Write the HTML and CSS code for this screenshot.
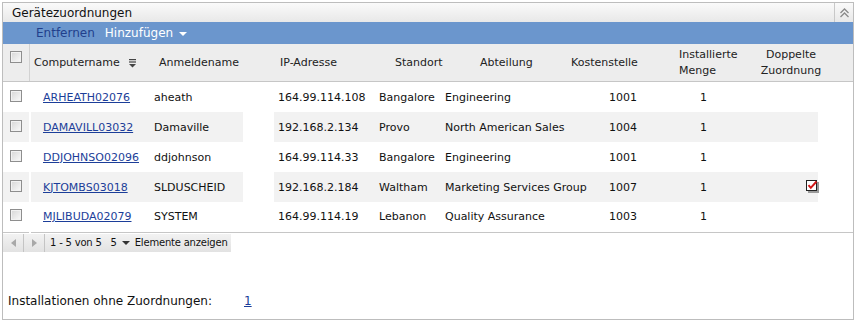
FILE: index.html
```html
<!DOCTYPE html>
<html lang="de">
<head>
    <meta charset="UTF-8">
    <title>Gerätezuordnungen</title>
    <link rel="stylesheet" href="styles.css">
</head>
<body>
    <div class="panel">
        <div class="panel-title">
            <span class="title-text">Gerätezuordnungen</span>
            <span class="collapse">
                <svg width="11" height="10" viewBox="0 0 11 10">
                    <path d="M1.5 5 L5.5 1 L9.5 5 M1.5 9 L5.5 5 L9.5 9" fill="none" stroke="#8a8a8a" stroke-width="1.3"/>
                </svg>
            </span>
        </div>

        <div class="toolbar">
            <span class="tool tool-dark">Entfernen</span>
            <span class="tool tool-light">Hinzufügen <span class="caret"></span></span>
        </div>

        <div class="grid-head">
            <div class="hcell h-cb"><span class="cb"></span></div>
            <div class="hcell h-comp">Computername
                <svg class="sort" width="9" height="9" viewBox="0 0 9 9">
                    <rect x="1" y="0" width="7" height="1.2" fill="#444"/>
                    <rect x="1" y="2.4" width="7" height="1.2" fill="#444"/>
                    <path d="M1 5 H8 L4.5 8.6 Z" fill="#444"/>
                </svg>
            </div>
            <div class="hcell h-user">Anmeldename</div>
            <div class="hcell h-ip">IP-Adresse</div>
            <div class="hcell h-site">Standort</div>
            <div class="hcell h-dept">Abteilung</div>
            <div class="hcell h-cost">Kostenstelle</div>
            <div class="hcell h-qty">Installierte<br>Menge</div>
            <div class="hcell h-dup">Doppelte<br>Zuordnung</div>
        </div>

        <table class="grid">
            <colgroup>
                <col class="c-cb">
                <col class="c-comp">
                <col class="c-user">
                <col class="c-gap">
                <col class="c-ip">
                <col class="c-site">
                <col class="c-dept">
                <col class="c-cost">
                <col class="c-qty">
                <col class="c-dup">
                <col class="c-end">
            </colgroup>
            <tbody>
                <tr>
                    <td class="td-cb"><span class="cb"></span></td>
                    <td class="td-comp"><a href="#">ARHEATH02076</a></td>
                    <td>aheath</td>
                    <td class="gap"></td>
                    <td>164.99.114.108</td>
                    <td>Bangalore</td>
                    <td>Engineering</td>
                    <td>1001</td>
                    <td>1</td>
                    <td></td>
                    <td class="gap"></td>
                </tr>
                <tr class="alt">
                    <td class="td-cb"><span class="cb"></span></td>
                    <td class="td-comp"><a href="#">DAMAVILL03032</a></td>
                    <td>Damaville</td>
                    <td class="gap"></td>
                    <td>192.168.2.134</td>
                    <td>Provo</td>
                    <td>North American Sales</td>
                    <td>1004</td>
                    <td>1</td>
                    <td></td>
                    <td class="gap"></td>
                </tr>
                <tr>
                    <td class="td-cb"><span class="cb"></span></td>
                    <td class="td-comp"><a href="#">DDJOHNSO02096</a></td>
                    <td>ddjohnson</td>
                    <td class="gap"></td>
                    <td>164.99.114.33</td>
                    <td>Bangalore</td>
                    <td>Engineering</td>
                    <td>1001</td>
                    <td>1</td>
                    <td></td>
                    <td class="gap"></td>
                </tr>
                <tr class="alt">
                    <td class="td-cb"><span class="cb"></span></td>
                    <td class="td-comp"><a href="#">KJTOMBS03018</a></td>
                    <td>SLDUSCHEID</td>
                    <td class="gap"></td>
                    <td>192.168.2.184</td>
                    <td>Waltham</td>
                    <td>Marketing Services Group</td>
                    <td>1007</td>
                    <td>1</td>
                    <td class="td-dup">
                        <svg width="13" height="13" viewBox="0 0 13 13">
                            <rect x="2" y="2" width="11" height="11" fill="#9a9a9a"/>
                            <rect x="0.5" y="0.5" width="10" height="10" fill="#fff" stroke="#222"/>
                            <path d="M2.5 5.2 L4.8 7.8 L10.5 1.5" fill="none" stroke="#d21818" stroke-width="2"/>
                        </svg>
                    </td>
                    <td class="gap"></td>
                </tr>
                <tr>
                    <td class="td-cb"><span class="cb"></span></td>
                    <td class="td-comp"><a href="#">MJLIBUDA02079</a></td>
                    <td>SYSTEM</td>
                    <td class="gap"></td>
                    <td>164.99.114.19</td>
                    <td>Lebanon</td>
                    <td>Quality Assurance</td>
                    <td>1003</td>
                    <td>1</td>
                    <td></td>
                    <td class="gap"></td>
                </tr>
            </tbody>
        </table>

        <div class="pager">
            <span class="pg-btn"><span class="arrow-left"></span></span>
            <span class="pg-btn"><span class="arrow-right"></span></span>
            <span class="pg-text">1 - 5 von 5</span>
            <span class="pg-size">5 <span class="caret dark"></span></span>
            <span class="pg-text">Elemente anzeigen</span>
        </div>

        <div class="summary">
            <span class="summary-label">Installationen ohne Zuordnungen:</span>
            <a href="#" class="summary-link">1</a>
        </div>
    </div>
</body>
</html>
```

FILE: styles.css
```css
/* Grundlayout */
* {
    margin: 0;
    padding: 0;
    box-sizing: border-box;
}

body {
    font-family: 'DejaVu Sans', sans-serif;
    font-size: 11px;
    color: #111;
    background: #fff;
    padding: 2px;
}

.panel {
    width: 852px;
    height: 318px;
    border: 1px solid #bdbdbd;
    background: #fff;
}

/* Titelleiste */
.panel-title {
    height: 19px;
    display: flex;
    align-items: center;
    justify-content: space-between;
    background: linear-gradient(#fafafa, #e8e8e8);
}

.title-text {
    font-size: 12px;
    padding-left: 9px;
    color: #111;
}

.collapse {
    width: 19px;
    height: 19px;
    border-left: 1px solid #c8c8c8;
    display: flex;
    align-items: center;
    justify-content: center;
}

/* Blaue Aktionsleiste */
.toolbar {
    height: 22px;
    background: #6b96cd;
    display: flex;
    align-items: center;
    padding-left: 33px;
    gap: 10px;
    font-size: 12px;
}

.tool-dark {
    color: #213f8c;
}

.tool-light {
    color: #fff;
}

.caret {
    display: inline-block;
    width: 0;
    height: 0;
    border-left: 4px solid transparent;
    border-right: 4px solid transparent;
    border-top: 4px solid #fff;
    vertical-align: middle;
    margin-left: 2px;
}

.caret.dark {
    border-top-color: #333;
}

/* Checkbox */
.cb {
    display: inline-block;
    width: 12px;
    height: 12px;
    border: 1px solid #8e8e8e;
    background: linear-gradient(135deg, #d6d6d6, #fafafa);
    box-shadow: inset 0 0 0 1px #f2f2f2;
}

/* Tabellenkopf */
.grid-head {
    display: flex;
    height: 38px;
    background: #ededed;
    border-bottom: 1px solid #c6c6c6;
    color: #222;
}

.hcell {
    display: flex;
    align-items: center;
    padding-left: 10px;
    line-height: 16px;
}

.h-cb {
    width: 27px;
    padding-left: 7px;
    align-items: flex-start;
    padding-top: 7px;
    border-right: 1px solid #d2d2d2;
}

.h-comp {
    width: 120px;
    padding-left: 4px;
    padding-top: 1px;
}

.sort {
    margin-left: 8px;
}

.h-user {
    width: 120px;
    padding-left: 9px;
}

.h-ip {
    width: 115px;
}

.h-site {
    width: 85px;
}

.h-dept {
    width: 91px;
}

.h-cost {
    width: 108px;
}

.h-qty {
    width: 73px;
}

.h-dup {
    width: 98px;
    padding-left: 0;
    justify-content: center;
    text-align: center;
}

/* Datenzeilen */
.grid {
    width: 850px;
    border-collapse: collapse;
    table-layout: fixed;
    border-bottom: 1px solid #c6c6c6;
}

.c-cb { width: 27px; }
.c-comp { width: 120px; }
.c-user { width: 93px; }
.c-gap { width: 31px; }
.c-ip { width: 101px; }
.c-site { width: 66px; }
.c-dept { width: 164px; }
.c-cost { width: 91px; }
.c-qty { width: 44px; }
.c-dup { width: 78px; }
.c-end { width: 35px; }

.grid td {
    height: 30px;
    padding: 0 0 0 4px;
    white-space: nowrap;
    vertical-align: middle;
}

.grid tr.alt td {
    background: #f2f2f2;
}

.grid tr.alt td.gap {
    background: transparent;
}

.grid td.td-cb {
    padding-left: 7px;
    border-right: 1px solid #d2d2d2;
}

.grid td.td-comp {
    padding-left: 12px;
    border-left: 2px solid #fff;
}

.grid td.td-dup {
    padding-left: 66px;
    padding-top: 2px;
}

.grid a {
    color: #1c3e99;
}

/* Blättern */
.pager {
    display: inline-flex;
    align-items: center;
    height: 18px;
    margin-top: 1px;
    background: linear-gradient(#f2f2f2, #e2e2e2);
    color: #111;
    font-size: 10px;
    letter-spacing: -0.2px;
}

.pg-btn {
    width: 21px;
    height: 18px;
    border-right: 1px solid #c4c4c4;
    display: flex;
    align-items: center;
    justify-content: center;
}

.arrow-left {
    width: 0;
    height: 0;
    border-top: 4px solid transparent;
    border-bottom: 4px solid transparent;
    border-right: 5px solid #a8a8a8;
}

.arrow-right {
    width: 0;
    height: 0;
    border-top: 4px solid transparent;
    border-bottom: 4px solid transparent;
    border-left: 5px solid #a8a8a8;
}

.pg-text {
    padding-left: 5px;
    padding-right: 3px;
}

.pg-size {
    padding-left: 6px;
}

/* Zusammenfassung */
.summary {
    display: flex;
    align-items: center;
    margin-top: 41px;
    padding-left: 5px;
    font-size: 12px;
    line-height: 16px;
}

.summary-label {
    width: 236px;
}

.summary-link {
    color: #1c3e99;
}
```
